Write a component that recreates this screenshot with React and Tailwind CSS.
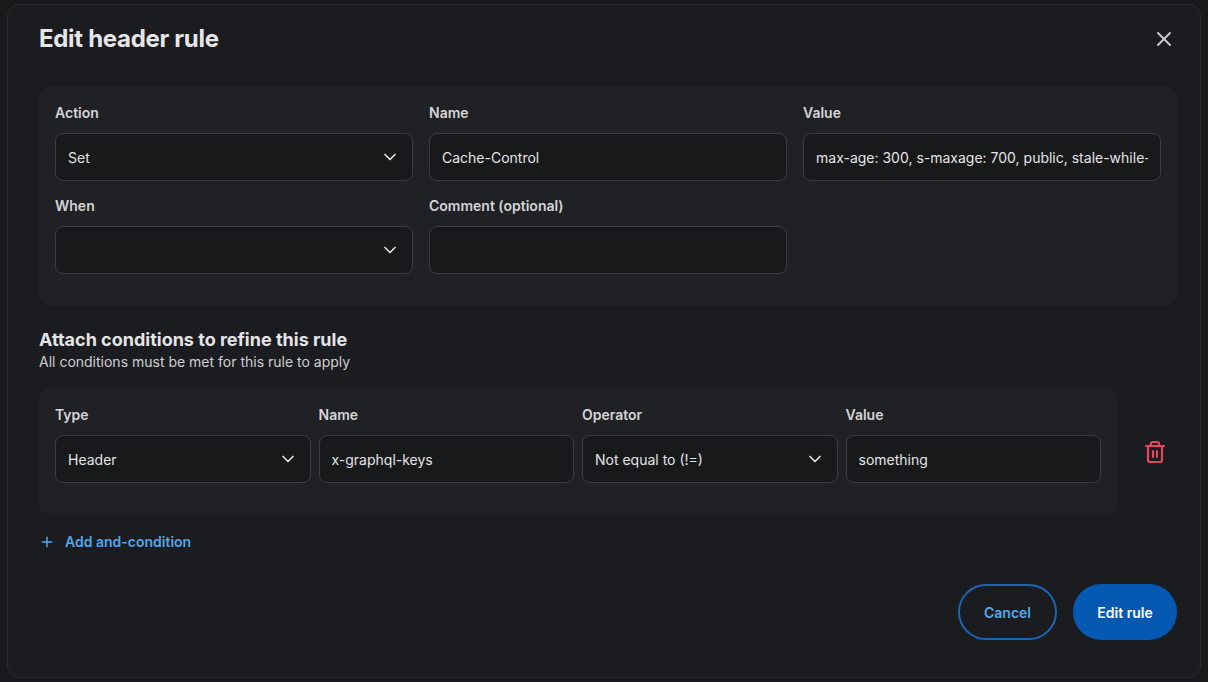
import React from 'react';
import { ChevronDown, X, Plus, Trash2 } from 'lucide-react';

const Field = ({ label, value, select, w }) => (
    <div className={`flex flex-col ${w}`}>
        <label className="text-[14px] font-semibold text-[#d4d4d6] h-[21px] leading-[21px] mb-[10px]">{label}</label>
        <div className="h-[48px] rounded-[8px] border border-[#3b3d41] bg-[#18191b] flex items-center px-3 overflow-hidden">
            <span className="flex-1 whitespace-nowrap overflow-hidden text-[14px] text-[#e4e4e6]">{value}</span>
            {select && <ChevronDown size={20} className="text-[#e4e4e6] ml-2 shrink-0" />}
        </div>
    </div>
);

export default function App() {
    return (
        <div className="w-[1208px] h-[682px] bg-[#18191b] overflow-hidden flex" style={{ fontFamily: 'Inter, "Liberation Sans", sans-serif' }}>
            <div className="w-[7px]" />
            <div className="mt-[4px] mb-[4px] w-[1194px] rounded-[12px] border border-[#2a2b2e] bg-[#1b1c1f] pl-[31px] pr-[23px] pt-[20px] flex flex-col">
                <div className="flex items-center justify-between h-[28px]">
                    <h2 className="text-[24px] font-bold text-[#e6e6e8] tracking-[-0.3px]">Edit header rule</h2>
                    <X size={24} className="text-[#c8c8ca] mr-[1px]" />
                </div>
                <div className="mt-[33px] rounded-[12px] bg-[#202124] p-4 pb-[32px]">
                    <div className="grid grid-cols-3 gap-x-4 gap-y-[14px]">
                        <Field label="Action" value="Set" select />
                        <Field label="Name" value="Cache-Control" />
                        <Field label="Value" value="max-age: 300, s-maxage: 700, public, stale-while-revalidate" />
                        <Field label="When" value="" select />
                        <Field label="Comment (optional)" value="" />
                    </div>
                </div>
                <h3 className="mt-[22px] text-[18px] font-bold text-[#e4e4e6] leading-[24px]">Attach conditions to refine this rule</h3>
                <p className="text-[14px] text-[#cfcfd2] leading-[20px]">All conditions must be met for this rule to apply</p>
                <div className="mt-[16px] flex items-center gap-[26px]">
                    <div className="w-[1078px] rounded-[12px] bg-[#202124] p-4 pb-[32px] flex gap-2">
                        <Field w="w-[256px]" label="Type" value="Header" select />
                        <Field w="w-[256px]" label="Name" value="x-graphql-keys" />
                        <Field w="w-[256px]" label="Operator" value="Not equal to (!=)" select />
                        <Field w="w-[256px]" label="Value" value="something" />
                    </div>
                    <Trash2 size={24} strokeWidth={2.2} className="text-[#e5455f]" />
                </div>
                <div className="mt-[16px] flex items-center gap-[10px] text-[#4fa6ec] text-[14px] font-semibold">
                    <Plus size={16} strokeWidth={2.2} />Add and-condition
                </div>
                <div className="mt-[32px] flex justify-end gap-4">
                    <button className="h-[56px] w-[99px] rounded-full border-2 border-[#1a66b8] text-[#57a8ea] text-[14px] font-semibold">Cancel</button>
                    <button className="h-[56px] w-[104px] rounded-full bg-[#0659b3] text-white text-[14px] font-semibold">Edit rule</button>
                </div>
            </div>
        </div>
    );
}
